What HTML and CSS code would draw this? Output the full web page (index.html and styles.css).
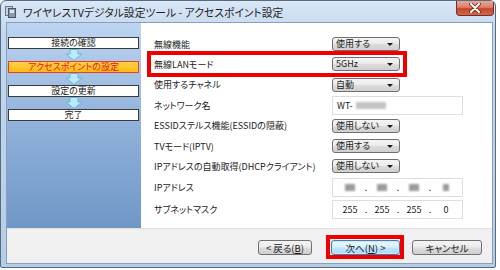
FILE: index.html
```html
<!DOCTYPE html>
<html lang="ja">

<head>
    <meta charset="UTF-8">
    <title>アクセスポイント設定</title>
    <link rel="stylesheet" href="styles.css">
</head>

<body>
    <div class="window">
        <div class="titlebar">
            <svg class="appIcon" width="11" height="12" viewBox="0 0 11 12">
                <rect x="0.5" y="0.5" width="7" height="9" fill="#c8d0dc" stroke="#6c7686"/>
                <rect x="3.5" y="2.5" width="7" height="9" fill="#8a98ae" stroke="#4c566a"/>
                <rect x="5" y="4" width="4" height="3" fill="#dfe7f2"/>
            </svg>
            <span class="title">ワイヤレスTVデジタル設定ツール - アクセスポイント設定</span>
            <div class="closeButton">
                <svg width="12" height="10" viewBox="0 0 12 10">
                    <path d="M2 1 L10 9 M10 1 L2 9" stroke="#6a2418" stroke-width="3.6" stroke-linecap="round"/>
                    <path d="M2 1 L10 9 M10 1 L2 9" stroke="#ffffff" stroke-width="2" stroke-linecap="round"/>
                </svg>
            </div>
        </div>

        <div class="client">
            <div class="main">
                <div class="steps">
                    <div class="step">接続の確認</div>
                    <svg class="stepArrow" width="18" height="12" viewBox="0 0 18 12">
                        <polygon points="5,0.5 13,0.5 13,5 17,5 9,11.5 1,5 5,5" fill="#b6ecfb" stroke="#6fb4d6"/>
                    </svg>
                    <div class="step current">アクセスポイントの設定</div>
                    <svg class="stepArrow" width="18" height="12" viewBox="0 0 18 12">
                        <polygon points="5,0.5 13,0.5 13,5 17,5 9,11.5 1,5 5,5" fill="#b6ecfb" stroke="#6fb4d6"/>
                    </svg>
                    <div class="step">設定の更新</div>
                    <svg class="stepArrow" width="18" height="12" viewBox="0 0 18 12">
                        <polygon points="5,0.5 13,0.5 13,5 17,5 9,11.5 1,5 5,5" fill="#b6ecfb" stroke="#6fb4d6"/>
                    </svg>
                    <div class="step">完了</div>
                </div>

                <div class="form">
                    <div class="row">
                        <span class="label">無線機能</span>
                        <div class="combo">使用する</div>
                    </div>
                    <div class="row marked">
                        <span class="label">無線LANモード</span>
                        <div class="combo">5GHz</div>
                        <div class="redFrame"></div>
                    </div>
                    <div class="row tall1">
                        <span class="label">使用するチャネル</span>
                        <div class="combo">自動</div>
                    </div>
                    <div class="row">
                        <span class="label">ネットワーク名</span>
                        <div class="textBox">WT-<span class="blur wide"></span></div>
                    </div>
                    <div class="row tall1">
                        <span class="label">ESSIDステルス機能(ESSIDの隠蔽)</span>
                        <div class="combo">使用しない</div>
                    </div>
                    <div class="row">
                        <span class="label">TVモード(IPTV)</span>
                        <div class="combo">使用する</div>
                    </div>
                    <div class="row">
                        <span class="label">IPアドレスの自動取得(DHCPクライアント)</span>
                        <div class="combo">使用しない</div>
                    </div>
                    <div class="row tall2">
                        <span class="label">IPアドレス</span>
                        <div class="textBox ip">
                            <span class="octet"><span class="blur"></span></span><span class="dot">.</span>
                            <span class="octet"><span class="blur"></span></span><span class="dot">.</span>
                            <span class="octet"><span class="blur"></span></span><span class="dot">.</span>
                            <span class="octet"><span class="blur small"></span></span>
                        </div>
                    </div>
                    <div class="row tall2">
                        <span class="label">サブネットマスク</span>
                        <div class="textBox ip">
                            <span class="octet">255</span><span class="dot">.</span>
                            <span class="octet">255</span><span class="dot">.</span>
                            <span class="octet">255</span><span class="dot">.</span>
                            <span class="octet">0</span>
                        </div>
                    </div>
                </div>
            </div>

            <div class="footer">
                <button class="btn back">&lt; 戻る(<u>B</u>)</button>
                <div class="marked">
                    <button class="btn next default">次へ(<u>N</u>) &gt;</button>
                    <div class="redFrame"></div>
                </div>
                <button class="btn cancel">キャンセル</button>
            </div>
        </div>
    </div>
</body>

</html>
```

FILE: styles.css
```css
body,
html {
    margin: 0;
    padding: 0;
}

body {
    background-color: #ffffff;
    font-family: "Noto Sans CJK JP", "Liberation Sans", sans-serif;
    font-feature-settings: "palt";
    color: #1a1a1a;
}

.window {
    width: 496px;
    height: 268px;
    box-sizing: border-box;
    border: 1px solid #566a80;
    border-radius: 6px 6px 2px 2px;
    background: linear-gradient(to bottom, #d9e7f6 0%, #c4d8ee 12%, #bcd2ea 60%, #b6cde6 100%);
    display: flex;
    flex-direction: column;
    overflow: hidden;
}

.titlebar {
    height: 21px;
    display: flex;
    align-items: center;
    position: relative;
    padding-left: 4px;
}

.appIcon {
    margin-top: 1px;
    margin-right: 7px;
}

.title {
    font-size: 10.8px;
    color: #1e1e1e;
    margin-top: 1px;
}

.closeButton {
    position: absolute;
    top: 0;
    right: 1px;
    width: 38px;
    height: 15px;
    box-sizing: border-box;
    border: 1px solid #7a2a1e;
    border-top: none;
    border-radius: 0 0 4px 4px;
    background: linear-gradient(to bottom, #e9a798 0%, #d9806c 45%, #c4452c 55%, #d06a4e 100%);
    display: flex;
    align-items: center;
    justify-content: center;
}

.client {
    flex: 1;
    margin: 0 2px 3px 5px;
    border: 1px solid #8a9fb6;
    display: flex;
    flex-direction: column;
    background-color: #ffffff;
}

.main {
    height: 205px;
    display: flex;
}

.steps {
    width: 134px;
    box-sizing: border-box;
    padding-top: 14px;
    padding-left: 1px;
    background: linear-gradient(to bottom, #bdd5f1 0%, #93b4dc 45%, #6f97c6 100%);
    display: flex;
    flex-direction: column;
}

.step {
    width: 131px;
    height: 12px;
    box-sizing: border-box;
    border: 1px solid #3a3a3a;
    background-color: #ffffff;
    font-size: 9px;
    line-height: 10px;
    text-align: center;
    color: #202020;
}

.step.current {
    border-color: #e8402a;
    background: linear-gradient(to bottom, #ffd04a, #fdbb12);
    color: #e8101c;
}

.stepArrow {
    display: block;
    margin-left: 57px;
}

.form {
    flex: 1;
    padding-top: 11px;
    padding-left: 13px;
}

.row {
    height: 20px;
    display: flex;
    align-items: center;
    position: relative;
}

.row.tall1 {
    height: 21px;
}

.row.tall2 {
    height: 22px;
}

.label {
    width: 178px;
    font-size: 9px;
    color: #1a1a1a;
}

.combo {
    width: 68px;
    height: 14px;
    box-sizing: border-box;
    border: 1px solid #707070;
    border-radius: 3px;
    background: linear-gradient(to bottom, #f4f4f4 0%, #ebebeb 48%, #dcdcdc 52%, #d0d0d0 100%);
    font-size: 9px;
    line-height: 12px;
    padding-left: 3px;
    position: relative;
    color: #1a1a1a;
}

.combo::after {
    content: "";
    position: absolute;
    right: 6px;
    top: 5px;
    border-left: 3px solid transparent;
    border-right: 3px solid transparent;
    border-top: 3px solid #1a1a1a;
}

.textBox {
    width: 131px;
    height: 19px;
    box-sizing: border-box;
    border: 1px solid #dadde2;
    background-color: #ffffff;
    font-size: 9px;
    padding-left: 4px;
    display: flex;
    align-items: center;
}

.textBox.ip {
    padding-left: 5px;
}

.octet {
    width: 24px;
    text-align: center;
    display: flex;
    justify-content: center;
}

.dot {
    width: 8px;
    text-align: center;
}

.blur {
    display: inline-block;
    width: 10px;
    height: 7px;
    background-color: #9a9a9a;
    filter: blur(1.2px);
}

.blur.wide {
    width: 30px;
    background-color: #c4c4c4;
    margin-left: 3px;
}

.blur.small {
    width: 6px;
}

.marked {
    position: relative;
}

.row.marked .redFrame {
    position: absolute;
    left: -7px;
    top: -3px;
    width: 260px;
    height: 26px;
    box-sizing: border-box;
    border: 4px solid #ee0000;
}

.footer .redFrame {
    position: absolute;
    left: -5px;
    top: -5px;
    right: -4px;
    bottom: -4px;
    border: 4px solid #ee0000;
}

.footer {
    height: 35px;
    box-sizing: border-box;
    border-top: 1px solid #dfdfdf;
    background-color: #f0f0f0;
    padding-top: 11px;
    padding-right: 10px;
    display: flex;
    justify-content: flex-end;
    align-items: flex-start;
}

.btn {
    height: 15px;
    box-sizing: border-box;
    border: 1px solid #707070;
    border-radius: 3px;
    background: linear-gradient(to bottom, #f4f4f4 0%, #ebebeb 48%, #dddddd 52%, #cfcfcf 100%);
    font-family: "Noto Sans CJK JP", "Liberation Sans", sans-serif;
    font-feature-settings: "palt";
    font-size: 9.5px;
    line-height: 12px;
    padding: 0;
    color: #1a1a1a;
    display: block;
}

.btn u {
    text-underline-offset: 1px;
}

.btn.back {
    width: 54px;
    margin-right: 19px;
}

.btn.next {
    width: 69px;
}

.btn.default {
    border-color: #3c7fb1;
    background: linear-gradient(to bottom, #eaf6fd 0%, #d9f0fc 48%, #bee6fd 52%, #a7d9f5 100%);
    box-shadow: inset 0 0 0 1px #cde9f9;
}

.btn.cancel {
    width: 70px;
    margin-left: 12px;
}
```
